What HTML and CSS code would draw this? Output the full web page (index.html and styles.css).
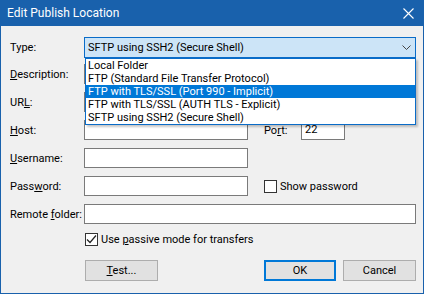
FILE: index.html
```html
<!DOCTYPE html>
<html lang="en">
<head>
    <meta charset="UTF-8">
    <title>Edit Publish Location</title>
    <link rel="stylesheet" href="styles.css">
</head>
<body>
<div class="window">
    <div class="titlebar">
        <span class="title">Edit Publish Location</span>
        <svg class="close" width="11" height="11" viewBox="0 0 11 11">
            <path d="M0.5 0.5L10.5 10.5M10.5 0.5L0.5 10.5" stroke="#fff" stroke-width="1.1" fill="none"/>
        </svg>
    </div>

    <div class="content">
        <div class="row row-type">
            <span class="lbl">Type:</span>
            <div class="combo">
                <span>SFTP using SSH2 (Secure Shell)</span>
                <svg class="chev" width="9" height="5" viewBox="0 0 9 5">
                    <path d="M0.5 0.5L4.5 4.5L8.5 0.5" stroke="#444" fill="none"/>
                </svg>
            </div>
        </div>
        <div class="row">
            <span class="lbl"><u>D</u>escription:</span>
            <div class="edit grow"></div>
        </div>
        <div class="row">
            <span class="lbl">UR<u>L</u>:</span>
            <div class="edit grow"></div>
        </div>
        <div class="row">
            <span class="lbl"><u>H</u>ost:</span>
            <div class="edit half"></div>
            <span class="lbl-port">Po<u>r</u>t:</span>
            <div class="edit port">22</div>
        </div>
        <div class="row">
            <span class="lbl"><u>U</u>sername:</span>
            <div class="edit half"></div>
        </div>
        <div class="row">
            <span class="lbl">Pass<u>w</u>ord:</span>
            <div class="edit half"></div>
            <span class="check side"><span class="box"></span><span>Show password</span></span>
        </div>
        <div class="row">
            <span class="lbl">Remote <u>f</u>older:</span>
            <div class="edit grow"></div>
        </div>
        <div class="row row-passive">
            <span class="check">
                <span class="box">
                    <svg width="11" height="11" viewBox="0 0 11 11">
                        <path d="M1 5.5L4 8.5L10 1.5" stroke="#222" stroke-width="1.2" fill="none"/>
                    </svg>
                </span>
                <span>Use <u>p</u>assive mode for transfers</span>
            </span>
        </div>
        <div class="buttons">
            <div class="btn test"><span><u>T</u>est...</span></div>
            <div class="btn ok">OK</div>
            <div class="btn cancel">Cancel</div>
        </div>
    </div>

    <ul class="droplist">
        <li>Local Folder</li>
        <li>FTP (Standard File Transfer Protocol)</li>
        <li class="current">FTP with TLS/SSL (Port 990 - Implicit)</li>
        <li>FTP with TLS/SSL (AUTH TLS - Explicit)</li>
        <li>SFTP using SSH2 (Secure Shell)</li>
    </ul>
</div>
</body>
</html>
```

FILE: styles.css
```css
* {
    padding: 0;
    margin: 0;
    list-style: none;
    box-sizing: border-box;
}

body {
    font-family: "Segoe UI", Roboto, "Liberation Sans", sans-serif;
    font-size: 11px;
    color: #000;
    background: #fff;
    white-space: nowrap;
}

u {
    text-decoration: underline;
    text-underline-offset: 1px;
}

.window {
    width: 424px;
    height: 294px;
    position: relative;
    background: #f0f0f0;
    border: 1px solid #1961ac;
    border-top: 0;
    display: flex;
    flex-direction: column;
}

.titlebar {
    height: 26px;
    margin: 0 -1px;
    background: #1961ac;
    color: #fff;
    display: flex;
    align-items: center;
    justify-content: space-between;
    padding: 0 10px 0 7px;
    font-size: 12px;
}

.close {
    margin-top: 1px;
}

.content {
    padding: 11px 7px 0 9px;
    display: flex;
    flex-direction: column;
    gap: 8px;
}

.row {
    display: flex;
    align-items: center;
    height: 20px;
}

.row-type {
    height: 21px;
    margin-bottom: -2px;
}

.lbl {
    width: 74px;
    flex: none;
}

.combo {
    flex: 1;
    height: 21px;
    background: #cce4f7;
    border: 1px solid #0a6cc8;
    display: flex;
    align-items: center;
    justify-content: space-between;
    padding: 0 4px 0 3px;
}

.edit {
    height: 20px;
    background: #fff;
    border: 1px solid #7a7a7a;
    padding: 0 3px;
    line-height: 18px;
}

.grow {
    flex: 1;
}

.half {
    width: 164px;
}

.lbl-port {
    margin-left: 16px;
    width: 37px;
}

.port {
    width: 44px;
}

.check {
    display: flex;
    align-items: center;
}

.check .box {
    width: 13px;
    height: 13px;
    background: #fff;
    border: 1px solid #333;
    margin-right: 3px;
    display: flex;
    align-items: center;
    justify-content: center;
}

.side {
    margin-left: 16px;
}

.row-passive {
    height: 13px;
    margin-top: 1px;
    padding-left: 75px;
}

.buttons {
    display: flex;
    margin-top: 6px;
    padding-left: 75px;
}

.btn {
    height: 21px;
    background: #e1e1e1;
    border: 1px solid #adadad;
    display: flex;
    align-items: center;
    justify-content: center;
}

.test {
    width: 73px;
    margin-right: auto;
}

.ok {
    width: 72px;
    border: 2px solid #0078d7;
}

.cancel {
    width: 73px;
    margin-left: 7px;
}

.droplist {
    position: absolute;
    top: 58px;
    left: 84px;
    width: 331px;
    height: 67px;
    background: #fff;
    border: 1px solid #0a6cc8;
    box-shadow: 2px 2px 2px rgba(0, 0, 0, 0.22);
}

.droplist li {
    height: 13px;
    line-height: 13px;
    padding-left: 2px;
}

.droplist li.current {
    background: #0078d7;
    color: #fff;
}
```
